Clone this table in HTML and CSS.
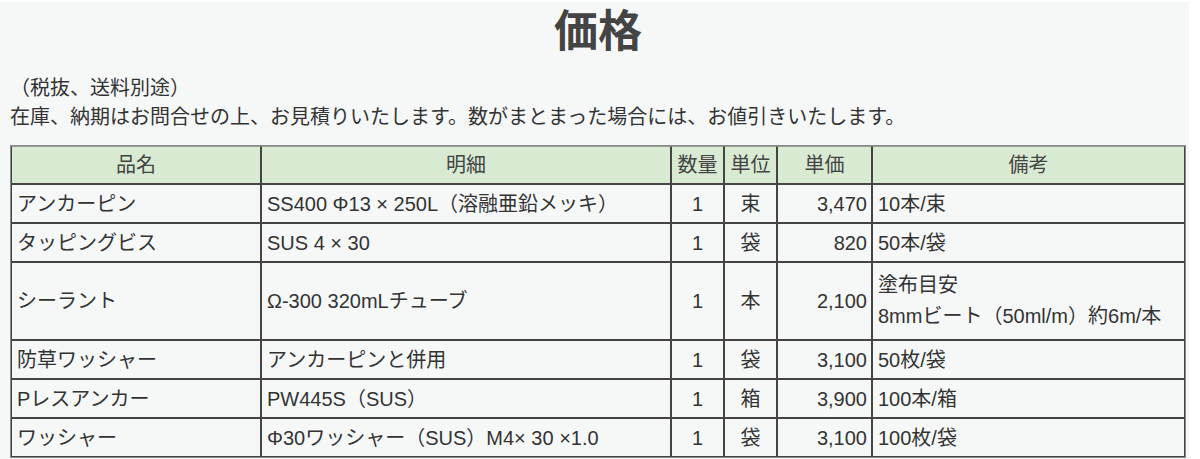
FILE: index.html
```html
<!DOCTYPE html>
<html lang="ja">
<head>
<meta charset="utf-8">
<title>価格</title>
<link rel="stylesheet" href="styles.css">
</head>
<body>
<div class="page">
  <div class="inner">
    <h1 class="title">価格</h1>
    <p class="note">（税抜、送料別途）</p>
    <p class="note">在庫、納期はお問合せの上、お見積りいたします。数がまとまった場合には、お値引きいたします。</p>
    <table class="price">
      <colgroup>
        <col class="c-name"><col class="c-desc"><col class="c-qty"><col class="c-unit"><col class="c-price"><col class="c-rem">
      </colgroup>
      <thead>
        <tr class="head">
          <th>品名</th><th>明細</th><th>数量</th><th>単位</th><th>単価</th><th>備考</th>
        </tr>
      </thead>
      <tbody>
        <tr class="row">
          <td>アンカーピン</td><td>SS400 Φ13 × 250L（溶融亜鉛メッキ）</td><td class="ctr">1</td><td class="ctr">束</td><td class="num">3,470</td><td>10本/束</td>
        </tr>
        <tr class="row">
          <td>タッピングビス</td><td>SUS 4 × 30</td><td class="ctr">1</td><td class="ctr">袋</td><td class="num">820</td><td>50本/袋</td>
        </tr>
        <tr class="row tall">
          <td>シーラント</td><td>Ω-300 320mLチューブ</td><td class="ctr">1</td><td class="ctr">本</td><td class="num">2,100</td><td class="multi">塗布目安<br>8mmビート（50ml/m）約6m/本</td>
        </tr>
        <tr class="row">
          <td>防草ワッシャー</td><td>アンカーピンと併用</td><td class="ctr">1</td><td class="ctr">袋</td><td class="num">3,100</td><td>50枚/袋</td>
        </tr>
        <tr class="row">
          <td>Pレスアンカー</td><td>PW445S（SUS）</td><td class="ctr">1</td><td class="ctr">箱</td><td class="num">3,900</td><td>100本/箱</td>
        </tr>
        <tr class="row">
          <td>ワッシャー</td><td>Φ30ワッシャー（SUS）M4× 30 ×1.0</td><td class="ctr">1</td><td class="ctr">袋</td><td class="num">3,100</td><td>100枚/袋</td>
        </tr>
      </tbody>
    </table>
  </div>
</div>
</body>
</html>
```

FILE: styles.css
```css
html, body {
  margin: 0;
  padding: 0;
  background: #ffffff;
}
body {
  font-family: "Liberation Sans", "Noto Sans CJK JP", sans-serif;
  color: #333333;
}
.page {
  margin-top: 2px;
  width: 1189px;
  height: 457px;
  background: #f6f8f8;
  padding-left: 10px;
  box-sizing: border-box;
  overflow: hidden;
}
.inner {
  width: 1176px;
}
.title {
  margin: 0;
  font-size: 44px;
  font-weight: bold;
  line-height: 60px;
  text-align: center;
  color: #444444;
}
.note {
  margin: 0;
  font-size: 20px;
  line-height: 29px;
}
.note:first-of-type {
  margin-top: 12px;
}
.price {
  margin-top: 13px;
  width: 1176px;
  table-layout: fixed;
  border-collapse: separate;
  border-spacing: 0;
  border: 1px solid #8a8a8a;
  font-size: 20px;
  color: #333333;
}
.c-name { width: 250px; }
.c-desc { width: 410px; }
.c-qty { width: 53px; }
.c-unit { width: 53px; }
.c-price { width: 95px; }
.c-rem { width: 313px; }
.price th, .price td {
  border: 1px solid #444444;
  padding: 0 5px;
  line-height: 30px;
  vertical-align: middle;
  white-space: nowrap;
  overflow: hidden;
}
.price th {
  background: #d9ead3;
  font-weight: normal;
  color: #444444;
  text-align: center;
  border-top-color: #9a9a9a;
}
.head { height: 38px; }
.row { height: 39px; }
.row.tall { height: 78px; }
.price td.ctr { text-align: center; }
.price td.num { text-align: right; padding-right: 4px; }
.price td.multi { line-height: 31px; }
```
